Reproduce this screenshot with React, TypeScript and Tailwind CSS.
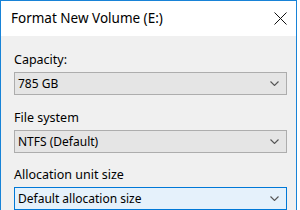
import React from 'react';

function Chevron() {
  return (
    <svg width="9" height="5" viewBox="0 0 9 5" className="shrink-0">
      <path d="M0.5 0.5 L4.5 4.5 L8.5 0.5" fill="none" stroke="#555" strokeWidth="1.1" />
    </svg>
  );
}

interface ComboProps {
  value: string;
  focused?: boolean;
}

function Combo({ value, focused }: ComboProps) {
  return (
    <div
      className={`h-[23px] flex items-center justify-between pl-[3px] pr-[7px] border ${
        focused ? 'bg-[#e5f1fb] border-[#0078d7]' : 'bg-[#e5e5e5] border-[#adadad]'
      }`}
    >
      <span className="text-[12px] text-black leading-none">{value}</span>
      <Chevron />
    </div>
  );
}

export default function App() {
  return (
    <div className="w-[300px] h-[210px] bg-white overflow-hidden" style={{ fontFamily: '"Noto Sans", "Open Sans", sans-serif' }}>
      <div className="w-[297px] h-[210px] border-t border-l border-r border-[#1883d7] flex flex-col">
        {/* title bar */}
        <div className="h-[35px] bg-white flex items-center justify-between pl-[10px] pr-[9px] shrink-0">
          <span className="text-[13.5px] text-black">Format New Volume (E:)</span>
          <svg width="13" height="13" viewBox="0 0 13 13">
            <path d="M0.5 0.5 L12.5 12.5 M12.5 0.5 L0.5 12.5" stroke="#111" strokeWidth="1" />
          </svg>
        </div>

        {/* body */}
        <div className="flex-1 bg-[#f0f0f0] pl-[13px] pr-[9px] pt-[15px]">
          <div className="text-[12.5px] text-black leading-[18px] mb-[3px]">Capacity:</div>
          <Combo value="785 GB" />
          <div className="text-[12.5px] text-black leading-[18px] mt-[14px] mb-[3px]">File system</div>
          <Combo value="NTFS (Default)" />
          <div className="text-[12.5px] text-black leading-[18px] mt-[13px] mb-[3px]">Allocation unit size</div>
          <Combo value="Default allocation size" focused />
        </div>
      </div>
    </div>
  );
}
